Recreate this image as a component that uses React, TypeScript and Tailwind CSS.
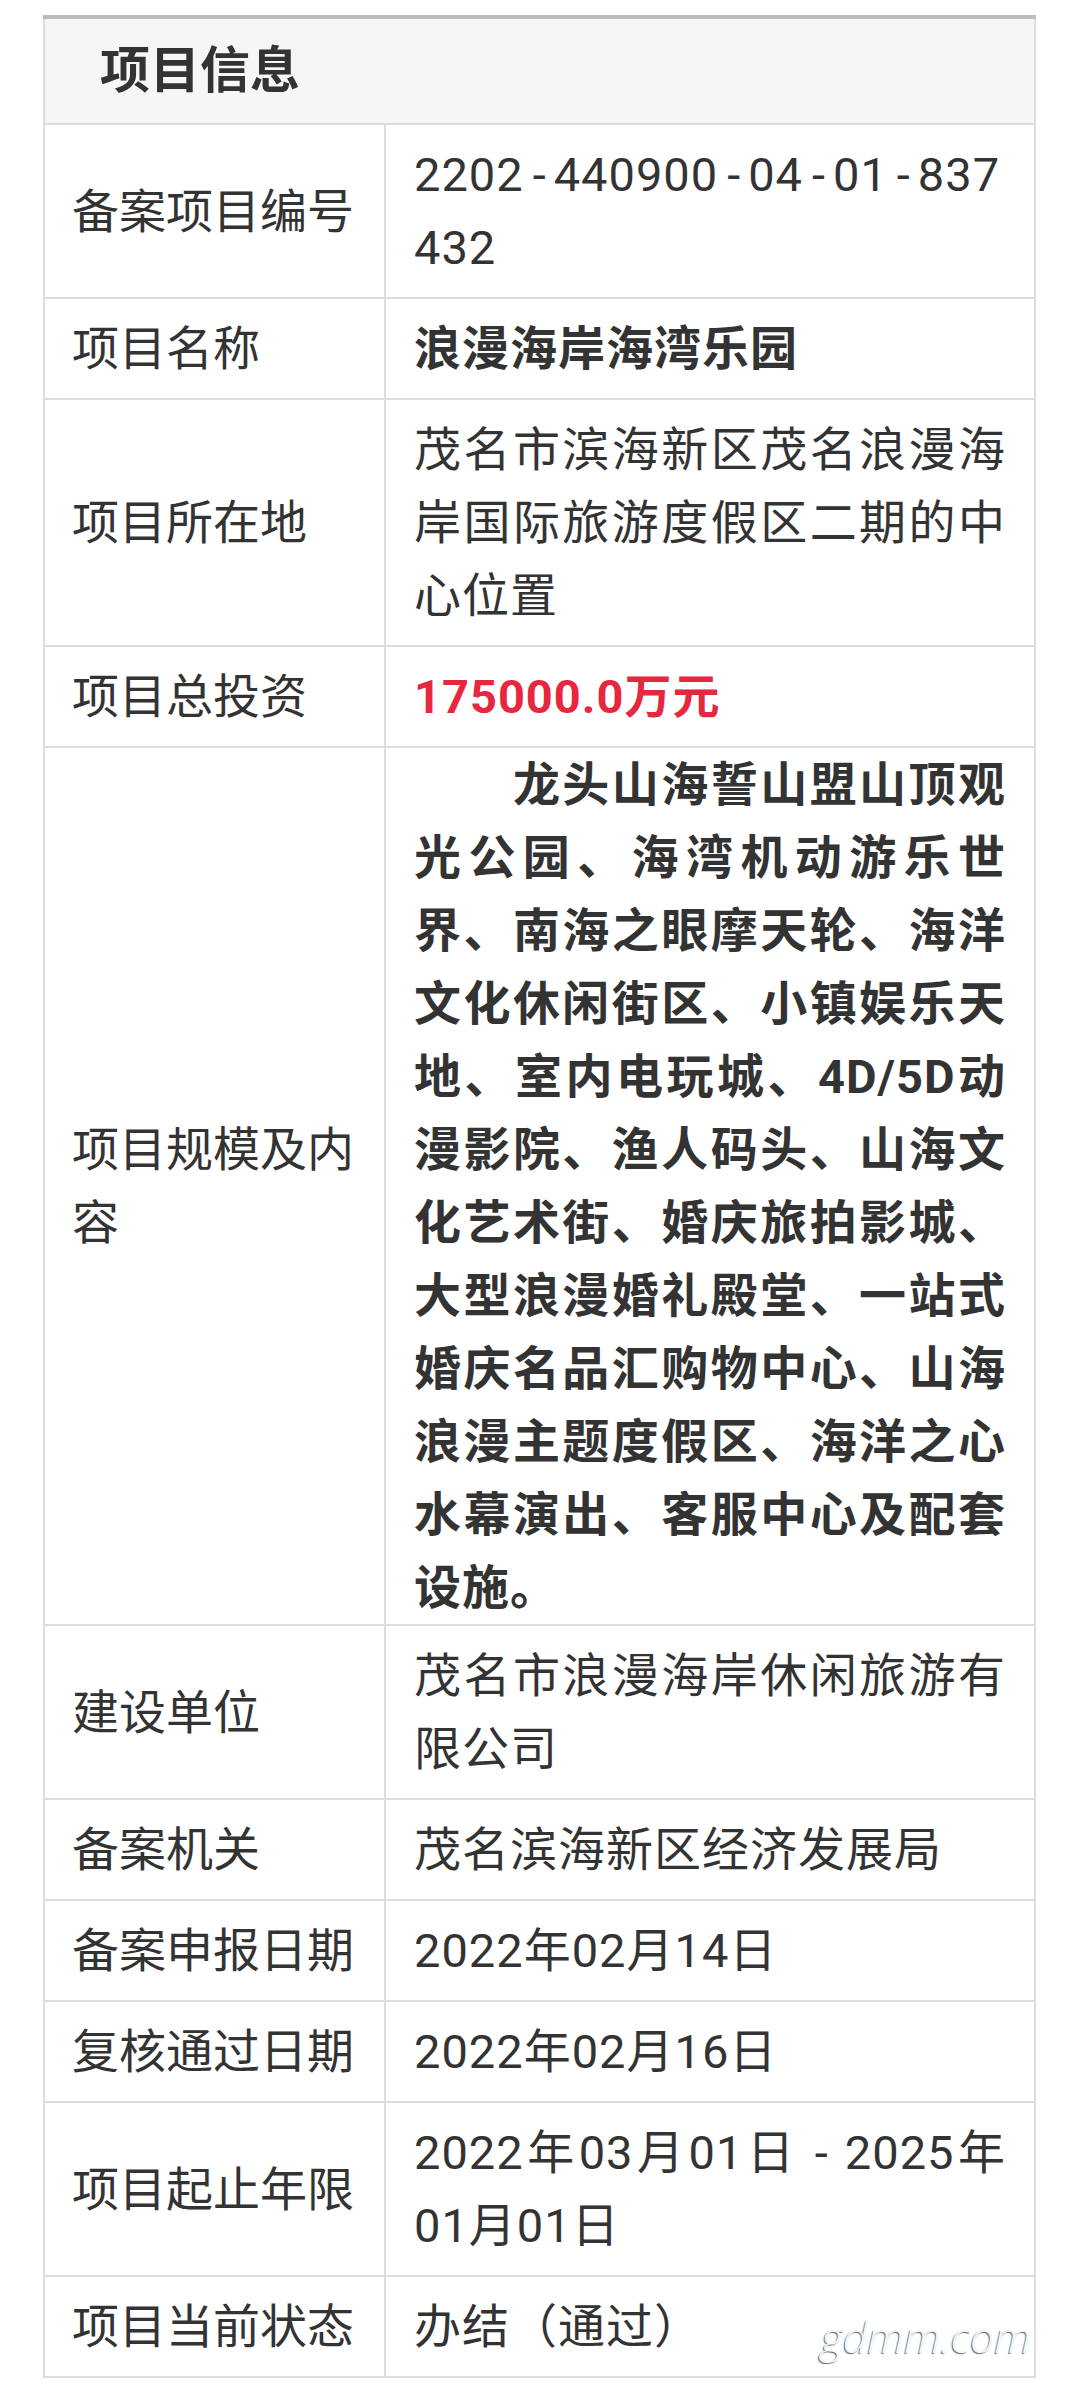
import React from "react";

type Row = { label: string; value: React.ReactNode; valueClass?: string };

const H = () => <span className="pl-[9px] pr-[7px]">-</span>;

const rows: Row[] = [
  {
    label: "备案项目编号",
    value: (
      <span className="break-all">
        2202<H />440900<H />04<H />01<H />837432
      </span>
    ),
  },
  { label: "项目名称", value: "浪漫海岸海湾乐园", valueClass: "font-bold" },
  { label: "项目所在地", value: "茂名市滨海新区茂名浪漫海岸国际旅游度假区二期的中心位置" },
  { label: "项目总投资", value: "175000.0万元", valueClass: "font-bold text-[#e6283f]" },
  {
    label: "项目规模及内容",
    value:
      "\u3000\u3000龙头山海誓山盟山顶观光公园、海湾机动游乐世界、南海之眼摩天轮、海洋文化休闲街区、小镇娱乐天地、室内电玩城、4D/5D动漫影院、渔人码头、山海文化艺术街、婚庆旅拍影城、大型浪漫婚礼殿堂、一站式婚庆名品汇购物中心、山海浪漫主题度假区、海洋之心水幕演出、客服中心及配套设施。",
    valueClass: "font-bold !py-0",
  },
  { label: "建设单位", value: "茂名市浪漫海岸休闲旅游有限公司" },
  { label: "备案机关", value: "茂名滨海新区经济发展局" },
  { label: "备案申报日期", value: "2022年02月14日" },
  { label: "复核通过日期", value: "2022年02月16日" },
  { label: "项目起止年限", value: "2022年03月01日 - 2025年01月01日" },
  { label: "项目当前状态", value: "办结（通过）" },
];

export default function App() {
  return (
    <div className="min-h-[2402px] bg-white pt-[15px] font-['Roboto','Noto_Sans_CJK_SC',sans-serif] text-[#333333]">
      <div className="relative ml-[43px] w-[993px]">
        <div className="h-[4px] bg-[#bbbbbb]" />
        <div className="border-x-2 border-[#dddddd]">
          <div className="flex h-[106px] items-center border-b-2 border-[#dddddd] bg-[#f6f6f6] pl-[55px] text-[50px] font-bold leading-none">
            项目信息
          </div>
          {rows.map((r) => (
            <div key={r.label} className="flex border-b-2 border-[#dddddd]">
              <div className="flex w-[341px] shrink-0 items-center border-r-2 border-[#dddddd] py-[13px] pl-[27px] pr-[28px] text-[47px] leading-[73px]">
                {r.label}
              </div>
              <div
                className={`min-w-0 flex-1 px-[28px] py-[13px] text-justify text-[47px] leading-[73px] tracking-[1px] ${r.valueClass ?? ""}`}
              >
                {r.value}
              </div>
            </div>
          ))}
        </div>
        <div className="pointer-events-none absolute bottom-[20px] right-[5px] font-['Open_Sans',sans-serif] text-[43px] font-light italic leading-none text-[#f7f7f7] [text-shadow:-1px_1px_1px_rgba(0,0,0,0.6)]">
          gdmm.com
        </div>
      </div>
    </div>
  );
}
